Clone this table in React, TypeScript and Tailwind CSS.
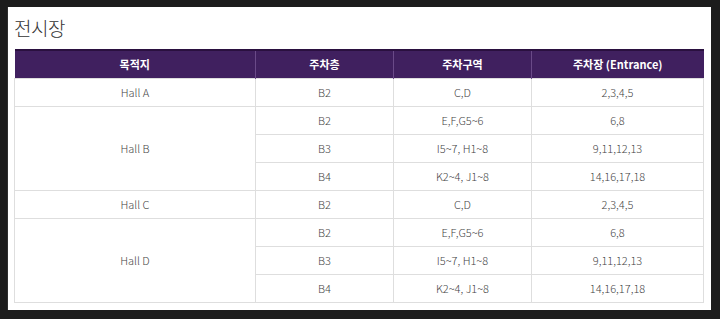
const rows = [
  { hall: "Hall A", items: [["B2", "C,D", "2,3,4,5"]] },
  {
    hall: "Hall B",
    items: [
      ["B2", "E,F,G5~6", "6,8"],
      ["B3", "I5~7, H1~8", "9,11,12,13"],
      ["B4", "K2~4, J1~8", "14,16,17,18"],
    ],
  },
  { hall: "Hall C", items: [["B2", "C,D", "2,3,4,5"]] },
  {
    hall: "Hall D",
    items: [
      ["B2", "E,F,G5~6", "6,8"],
      ["B3", "I5~7, H1~8", "9,11,12,13"],
      ["B4", "K2~4, J1~8", "14,16,17,18"],
    ],
  },
];

function App() {
  return (
    <div className="w-[720px] h-[319px] bg-[#1c1c1c] pt-[7px] pl-[7px] font-['Noto_Sans_CJK_KR',sans-serif]">
      <div className="w-[704px] h-[303px] bg-white border-l border-[#2e2e2e] pl-[6px]">
        <h1 className="text-[19px] leading-[22px] font-light text-[#333] pt-[10px] h-[42px] tracking-tight">
          전시장
        </h1>
        <table className="w-[689px] border-collapse table-fixed text-[11px] font-light text-[#444] text-center">
          <colgroup>
            <col className="w-[241px]" />
            <col className="w-[138px]" />
            <col className="w-[138px]" />
            <col className="w-[172px]" />
          </colgroup>
          <thead>
            <tr className="bg-[#40205f] text-white font-bold h-[28px] border-t-2 border-[#2a103f]">
              <th className="border-r border-[#6a4a88]">목적지</th>
              <th className="border-r border-[#6a4a88]">주차층</th>
              <th className="border-r border-[#6a4a88]">주차구역</th>
              <th>주차장 (Entrance)</th>
            </tr>
          </thead>
          <tbody>
            {rows.map((r) =>
              r.items.map((it, i) => (
                <tr key={r.hall + i} className="h-[28px]">
                  {i === 0 && (
                    <td rowSpan={r.items.length} className="border border-[#dedede]">
                      {r.hall}
                    </td>
                  )}
                  {it.map((c, j) => (
                    <td key={j} className="border border-[#dedede]">
                      {c}
                    </td>
                  ))}
                </tr>
              ))
            )}
          </tbody>
        </table>
      </div>
    </div>
  );
}

export default App;
